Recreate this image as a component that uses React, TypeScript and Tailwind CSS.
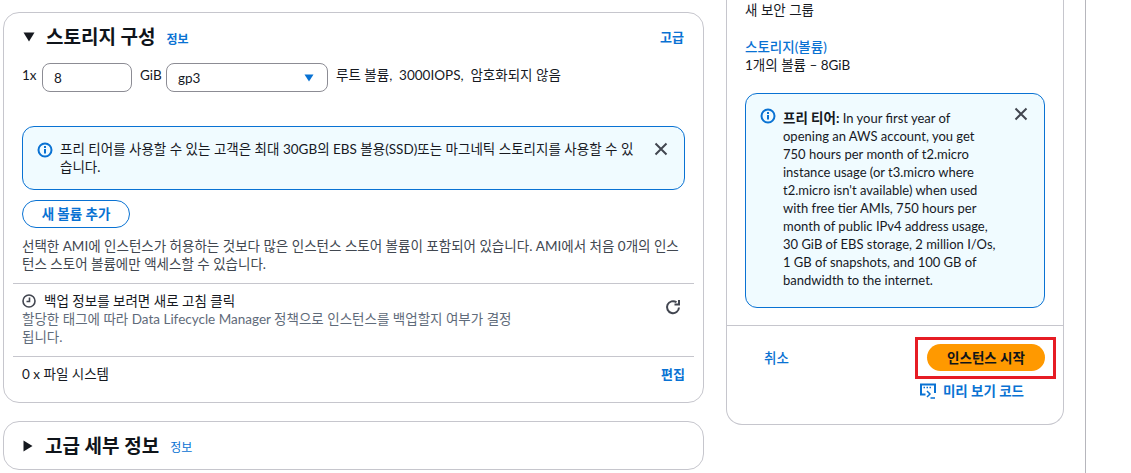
import React from "react";

const FONT = "font-['Lato','Noto_Sans_CJK_KR',sans-serif]";

function InfoIcon() {
  return (
    <svg width="16" height="16" viewBox="0 0 16 16" fill="none" className="shrink-0">
      <circle cx="8" cy="8" r="6.5" stroke="#0972d3" strokeWidth="2" />
      <path d="M8 7v4.5" stroke="#0972d3" strokeWidth="2" />
      <path d="M8 4v2" stroke="#0972d3" strokeWidth="2" />
    </svg>
  );
}

function CloseIcon() {
  return (
    <svg width="16" height="16" viewBox="0 0 16 16" fill="none" className="shrink-0">
      <path d="M2.5 2.5l11 11M13.5 2.5l-11 11" stroke="#424650" strokeWidth="2" />
    </svg>
  );
}

export default function App() {
  return (
    <div className={`${FONT} flex h-[473px] w-[1131px] overflow-hidden bg-white text-[13.5px] leading-[18px] text-[#16191f]`}>
      <div className="ml-[3px] flex w-[701px] shrink-0 flex-col gap-[18px] pt-[12px]">
        <section className="h-[391px] rounded-[16px] border border-[#c6c6cd] bg-white">
          <div className="flex items-center px-[19px] pt-[12px]">
            <svg width="12" height="10" viewBox="0 0 12 10" className="shrink-0"><path d="M0.5 0.5h11L6 9.5z" fill="#16191f" /></svg>
            <h2 className="ml-[11px] text-[19px] leading-[24px] font-bold text-[#0f141a]">스토리지 구성</h2>
            <a className="ml-[11px] mt-[5px] text-[12px] font-bold text-[#0972d3]">정보</a>
            <a className="ml-auto text-[13px] font-bold text-[#0972d3]">고급</a>
          </div>

          <div className="mt-[14px] flex items-start px-[18px]">
            <span className="mt-[3px] w-[20px]">1x</span>
            <div className="flex h-[29px] w-[90px] items-center rounded-[8px] border border-[#8c8c94] pl-[11px]">8</div>
            <span className="ml-[8px] mt-[3px] w-[26px]">GiB</span>
            <div className="flex h-[29px] w-[162px] items-center justify-between rounded-[8px] border border-[#8c8c94] pl-[11px] pr-[13px]">
              <span>gp3</span>
              <svg width="10" height="8" viewBox="0 0 10 8"><path d="M0.5 0.5h9L5 7.5z" fill="#0972d3" /></svg>
            </div>
            <span className="ml-[8px] mt-[3px]">루트 볼륨,&nbsp; 3000IOPS,&nbsp; 암호화되지 않음</span>
          </div>

          <div className="mx-[18px] mt-[34px] flex h-[64px] rounded-[12px] border border-[#0972d3] bg-[#f0fbff] pl-[14px] pr-[15px] pt-[13px]">
            <div className="pt-[2px]"><InfoIcon /></div>
            <p className="ml-[7px] w-[575px]">프리 티어를 사용할 수 있는 고객은 최대 30GB의 EBS 볼용(SSD)또는 마그네틱 스토리지를 사용할 수 있습니다.</p>
            <div className="ml-auto pt-[1px]"><CloseIcon /></div>
          </div>

          <button className="ml-[18px] mt-[10px] block h-[28px] w-[108px] rounded-full border border-[#0972d3] text-[13.5px] font-bold text-[#0972d3]">새 볼륨 추가</button>

          <p className="mx-[18px] mt-[9px] text-[#414750]">선택한 AMI에 인스턴스가 허용하는 것보다 많은 인스턴스 스토어 볼륨이 포함되어 있습니다. AMI에서 처음 0개의 인스턴스 스토어 볼륨에만 액세스할 수 있습니다.</p>

          <div className="mx-[9px] mt-[10px] flex h-[74px] border-y border-[#c6c6cd] pl-[9px] pr-[13px] pt-[8px]">
            <div className="w-[495px]">
              <div className="flex items-center gap-[8px]">
                <svg width="14" height="14" viewBox="0 0 14 14" fill="none" className="shrink-0">
                  <circle cx="7" cy="7" r="6" stroke="#424650" strokeWidth="1.6" />
                  <path d="M7.5 3.5v4H4.5" stroke="#424650" strokeWidth="1.6" />
                </svg>
                <span>백업 정보를 보려면 새로 고침 클릭</span>
              </div>
              <p className="text-[#5f6b7a]">할당한 태그에 따라 Data Lifecycle Manager 정책으로 인스턴스를 백업할지 여부가 결정됩니다.</p>
            </div>
            <svg width="16" height="16" viewBox="0 0 16 16" fill="none" className="ml-auto mt-[7px] shrink-0">
              <path d="M14 8.5A6 6 0 1 1 11.5 3.3" stroke="#424650" strokeWidth="2" />
              <path d="M14 1v4.5H9.5" stroke="#424650" strokeWidth="2" />
            </svg>
          </div>

          <div className="flex items-center justify-between px-[18px] pt-[8px]">
            <span>0 x 파일 시스템</span>
            <a className="text-[13px] font-bold text-[#0972d3]">편집</a>
          </div>
        </section>

        <section className="flex h-[49px] items-center rounded-[16px] border border-[#c6c6cd] px-[19px]">
          <svg width="10" height="12" viewBox="0 0 10 12" className="shrink-0"><path d="M0.5 0.5v11L9.5 6z" fill="#16191f" /></svg>
          <h2 className="ml-[12px] text-[19px] leading-[24px] font-bold text-[#0f141a]">고급 세부 정보</h2>
          <a className="ml-[11px] mt-[5px] text-[12px] text-[#0972d3]">정보</a>
        </section>
      </div>

      <div className="ml-[22px] mt-[-10px] h-[435px] w-[338px] shrink-0 rounded-b-[16px] border-x border-b border-[#c6c6cd]">
        <div className="px-[18px] pt-[11px]">
          <p>새 보안 그룹</p>
          <a className="mt-[19px] block font-medium text-[#0972d3]">스토리지(볼륨)</a>
          <p>1개의 볼륨 – 8GiB</p>
          <div className="mt-[19px] flex h-[215px] w-[300px] rounded-[12px] border border-[#0972d3] bg-[#f0fbff] pl-[14px] pr-[15px] pt-[14px]">
            <div><InfoIcon /></div>
            <p className="ml-[7px] mt-[1px] whitespace-nowrap text-[13px]">
              <b className="text-[13.5px]">프리 티어:</b> In your first year of<br />
              opening an AWS account, you get<br />
              750 hours per month of t2.micro<br />
              instance usage (or t3.micro where<br />
              t2.micro isn't available) when used<br />
              with free tier AMIs, 750 hours per<br />
              month of public IPv4 address usage,<br />
              30 GiB of EBS storage, 2 million I/Os,<br />
              1 GB of snapshots, and 100 GB of<br />
              bandwidth to the internet.
            </p>
            <div className="ml-auto mt-[-2px]"><CloseIcon /></div>
          </div>
        </div>
        <div className="mt-[17px] border-t border-[#c6c6cd] pl-[37px] pr-[18px] pt-[18px]">
          <div className="flex items-center justify-between">
            <a className="text-[13.5px] font-medium text-[#0972d3]">취소</a>
            <div className="relative">
              <button className="h-[27px] w-[118px] rounded-full bg-[#ff9900] text-[13.5px] font-bold text-[#0f141a]">인스턴스 시작</button>
              <div className="absolute left-[-12px] top-[-7px] h-[42px] w-[141px] border-[3px] border-[#e61c24]" />
            </div>
          </div>
          <div className="mt-[11px] flex items-center justify-end pr-[21px] font-bold text-[#0972d3]">
            <svg width="16" height="16" viewBox="0 0 16 16" fill="none" className="mr-[7px]">
              <path d="M5.5 11.5H1V1.5h14V10" stroke="#0972d3" strokeWidth="2" />
              <path d="M3.5 4.5h1.5M6.5 4.5h1.5M9.5 4.5h1.5" stroke="#0972d3" strokeWidth="1.5" />
              <path d="M7 8l3 3-3 3M10.5 15h4.5" stroke="#0972d3" strokeWidth="1.5" />
            </svg>
            <span>미리 보기 코드</span>
          </div>
        </div>
      </div>

      <div className="ml-[21px] h-full w-px bg-[#b6b6bc]" />
    </div>
  );
}
